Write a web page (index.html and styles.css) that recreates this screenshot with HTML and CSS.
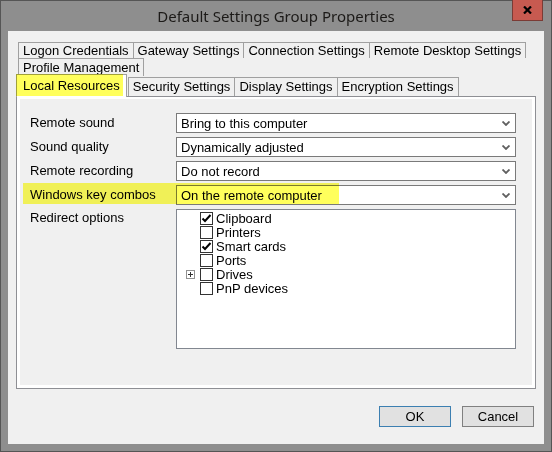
FILE: index.html
```html
<!DOCTYPE html>
<html>
  <head>
    <meta charset="utf-8" />
    <link rel="stylesheet" href="styles.css">
  </head>
  <body>
    <div class="window">
      <div class="titlebar">
        <span></span>
        <div class="title">Default Settings Group Properties</div>
        <div class="close">
          <svg width="9" height="8" viewBox="0 0 9 8">
            <path d="M1 0.5 L8 7.5 M8 0.5 L1 7.5" stroke="#000" stroke-width="2.2" fill="none" />
          </svg>
        </div>
      </div>

      <div class="client">
        <div class="tabs">
          <div class="tab-row">
            <div class="tab">Logon Credentials</div>
            <div class="tab">Gateway Settings</div>
            <div class="tab">Connection Settings</div>
            <div class="tab">Remote Desktop Settings</div>
          </div>
          <div class="tab-row second">
            <div class="tab">Profile Management</div>
          </div>
          <div class="tab-row front">
            <div class="tab active"><span class="marker"></span>Local Resources</div>
            <div class="tab">Security Settings</div>
            <div class="tab">Display Settings</div>
            <div class="tab">Encryption Settings</div>
          </div>
        </div>

        <div class="panel">
          <div class="page">
            <div class="field">
              <label>Remote sound</label>
              <div class="combo">
                <span>Bring to this computer</span>
                <svg class="arrow" width="8" height="5" viewBox="0 0 8 5"><path d="M0.5 0.5 L4 4 L7.5 0.5" /></svg>
              </div>
            </div>
            <div class="field">
              <label>Sound quality</label>
              <div class="combo">
                <span>Dynamically adjusted</span>
                <svg class="arrow" width="8" height="5" viewBox="0 0 8 5"><path d="M0.5 0.5 L4 4 L7.5 0.5" /></svg>
              </div>
            </div>
            <div class="field">
              <label>Remote recording</label>
              <div class="combo">
                <span>Do not record</span>
                <svg class="arrow" width="8" height="5" viewBox="0 0 8 5"><path d="M0.5 0.5 L4 4 L7.5 0.5" /></svg>
              </div>
            </div>
            <div class="field">
              <span class="marker wide"></span>
              <label>Windows key combos</label>
              <div class="combo">
                <span>On the remote computer</span>
                <svg class="arrow" width="8" height="5" viewBox="0 0 8 5"><path d="M0.5 0.5 L4 4 L7.5 0.5" /></svg>
              </div>
            </div>
            <div class="field tree-field">
              <label>Redirect options</label>
              <div class="tree">
                <div class="node">
                  <span class="expander"></span>
                  <span class="check on"><svg width="11" height="11" viewBox="0 0 11 11"><path d="M1.5 5.5 L4 8 L9.5 2" /></svg></span>
                  <span>Clipboard</span>
                </div>
                <div class="node">
                  <span class="expander"></span>
                  <span class="check"></span>
                  <span>Printers</span>
                </div>
                <div class="node">
                  <span class="expander"></span>
                  <span class="check on"><svg width="11" height="11" viewBox="0 0 11 11"><path d="M1.5 5.5 L4 8 L9.5 2" /></svg></span>
                  <span>Smart cards</span>
                </div>
                <div class="node">
                  <span class="expander"></span>
                  <span class="check"></span>
                  <span>Ports</span>
                </div>
                <div class="node">
                  <span class="expander">
                    <span class="plus"><svg width="7" height="7" viewBox="0 0 7 7"><path d="M1 3.5 H6 M3.5 1 V6" /></svg></span>
                  </span>
                  <span class="check"></span>
                  <span>Drives</span>
                </div>
                <div class="node">
                  <span class="expander"></span>
                  <span class="check"></span>
                  <span>PnP devices</span>
                </div>
              </div>
            </div>
          </div>
        </div>

        <div class="buttons">
          <button class="btn default">OK</button>
          <button class="btn">Cancel</button>
        </div>
      </div>
    </div>
  </body>
</html>
```

FILE: styles.css
```css
body {
  margin: 0;
  width: 552px;
  height: 452px;
  font-family: "Liberation Sans", Arial, sans-serif;
  font-size: 13px;
  color: #000;
}
.window {
  box-sizing: border-box;
  height: 452px;
  border: 1px solid #555555;
  background: #8e8e8e;
  padding: 0 7px 7px 7px;
  display: flex;
  flex-direction: column;
}
.titlebar {
  height: 30px;
  margin: 0 -7px;
  display: grid;
  grid-template-columns: 1fr auto 1fr;
}
.title {
  font-family: "Noto Sans", sans-serif;
  font-size: 15px;
  line-height: 30px;
  color: #1c1a18;
}
.close {
  justify-self: end;
  align-self: start;
  box-sizing: border-box;
  width: 31px;
  height: 21px;
  margin-top: -1px;
  margin-right: 8px;
  background: #c75a50;
  border: 1px solid #7b3b35;
  border-top: none;
  display: flex;
  align-items: center;
  justify-content: center;
}
.client {
  flex: 1;
  background: #f0f0f0;
  padding: 11px 8px 17px 8px;
  display: flex;
  flex-direction: column;
}

/* tabs */
.tab-row {
  display: flex;
  padding-left: 2px;
  height: 16px;
}
.tab-row.second {
  height: 18px;
}
.tab-row.front {
  height: 20px;
  align-items: flex-end;
}
.tab {
  box-sizing: border-box;
  height: 100%;
  padding: 0 4px;
  line-height: 15px;
  border: 1px solid #a0a0a0;
  border-bottom: none;
  margin-right: -1px;
  background: #f0f0f0;
  white-space: nowrap;
}
.tab-row.second .tab {
  line-height: 17px;
}
.tab-row.front .tab {
  height: 19px;
  line-height: 18px;
}
.tab-row.front .tab.active {
  position: relative;
  z-index: 1;
  height: 23px;
  margin: 0 0 -1px -2px;
  padding: 0 6px 1px 6px;
  line-height: 21px;
  background: #ffffff;
}
.tab-row.front .tab.active + .tab {
  margin-left: 1px;
}
.marker {
  position: absolute;
  background: #ffff5c;
  mix-blend-mode: multiply;
  pointer-events: none;
}
.tab .marker {
  left: -1px;
  top: -1px;
  right: 3px;
  bottom: 1px;
}
.marker.wide {
  left: -7px;
  top: -2px;
  width: 316px;
  height: 21px;
}

/* page */
.panel {
  flex: 1;
  border: 1px solid #8e8f94;
  background: #ffffff;
  padding: 2px 3px 3px 3px;
  display: flex;
}
.page {
  flex: 1;
  background: #f0f0f0;
  padding: 14px 16px 0 10px;
}
.field {
  position: relative;
  display: flex;
  align-items: center;
  height: 20px;
  margin-bottom: 4px;
}
.field label {
  width: 146px;
  flex-shrink: 0;
  margin-bottom: 2px;
}
.combo {
  flex: 1;
  box-sizing: border-box;
  height: 20px;
  border: 1px solid #7a7a7a;
  background: #ffffff;
  padding: 0 5px 0 4px;
  display: flex;
  align-items: center;
  justify-content: space-between;
}
.arrow path {
  fill: none;
  stroke: #606060;
  stroke-width: 1.8;
}
.tree-field {
  height: auto;
  align-items: flex-start;
}
.tree-field label {
  line-height: 18px;
}
.tree {
  flex: 1;
  box-sizing: border-box;
  height: 140px;
  border: 1px solid #828790;
  background: #ffffff;
  padding: 2px 0 0 9px;
}
.node {
  display: flex;
  align-items: flex-start;
  height: 14px;
  line-height: 13px;
}
.expander {
  width: 9px;
  margin-right: 5px;
  padding-top: 2px;
}
.plus {
  box-sizing: border-box;
  width: 9px;
  height: 9px;
  border: 1px solid #919191;
  display: flex;
  align-items: center;
  justify-content: center;
}
.plus path {
  stroke: #333333;
  stroke-width: 1;
  fill: none;
}
.check {
  box-sizing: border-box;
  width: 13px;
  height: 13px;
  border: 1px solid #333333;
  background: #ffffff;
  margin-right: 3px;
  display: flex;
  align-items: center;
  justify-content: center;
}
.check path {
  fill: none;
  stroke: #000000;
  stroke-width: 2;
}

/* buttons */
.buttons {
  display: flex;
  justify-content: flex-end;
  gap: 11px;
  margin-top: 17px;
  padding-right: 2px;
}
.btn {
  box-sizing: border-box;
  width: 72px;
  height: 21px;
  padding: 0;
  border: 1px solid #808080;
  background: #e1e1e1;
  font-family: "Liberation Sans", Arial, sans-serif;
  font-size: 13px;
  color: #000;
}
.btn.default {
  border-color: #3c7fb1;
}
```
